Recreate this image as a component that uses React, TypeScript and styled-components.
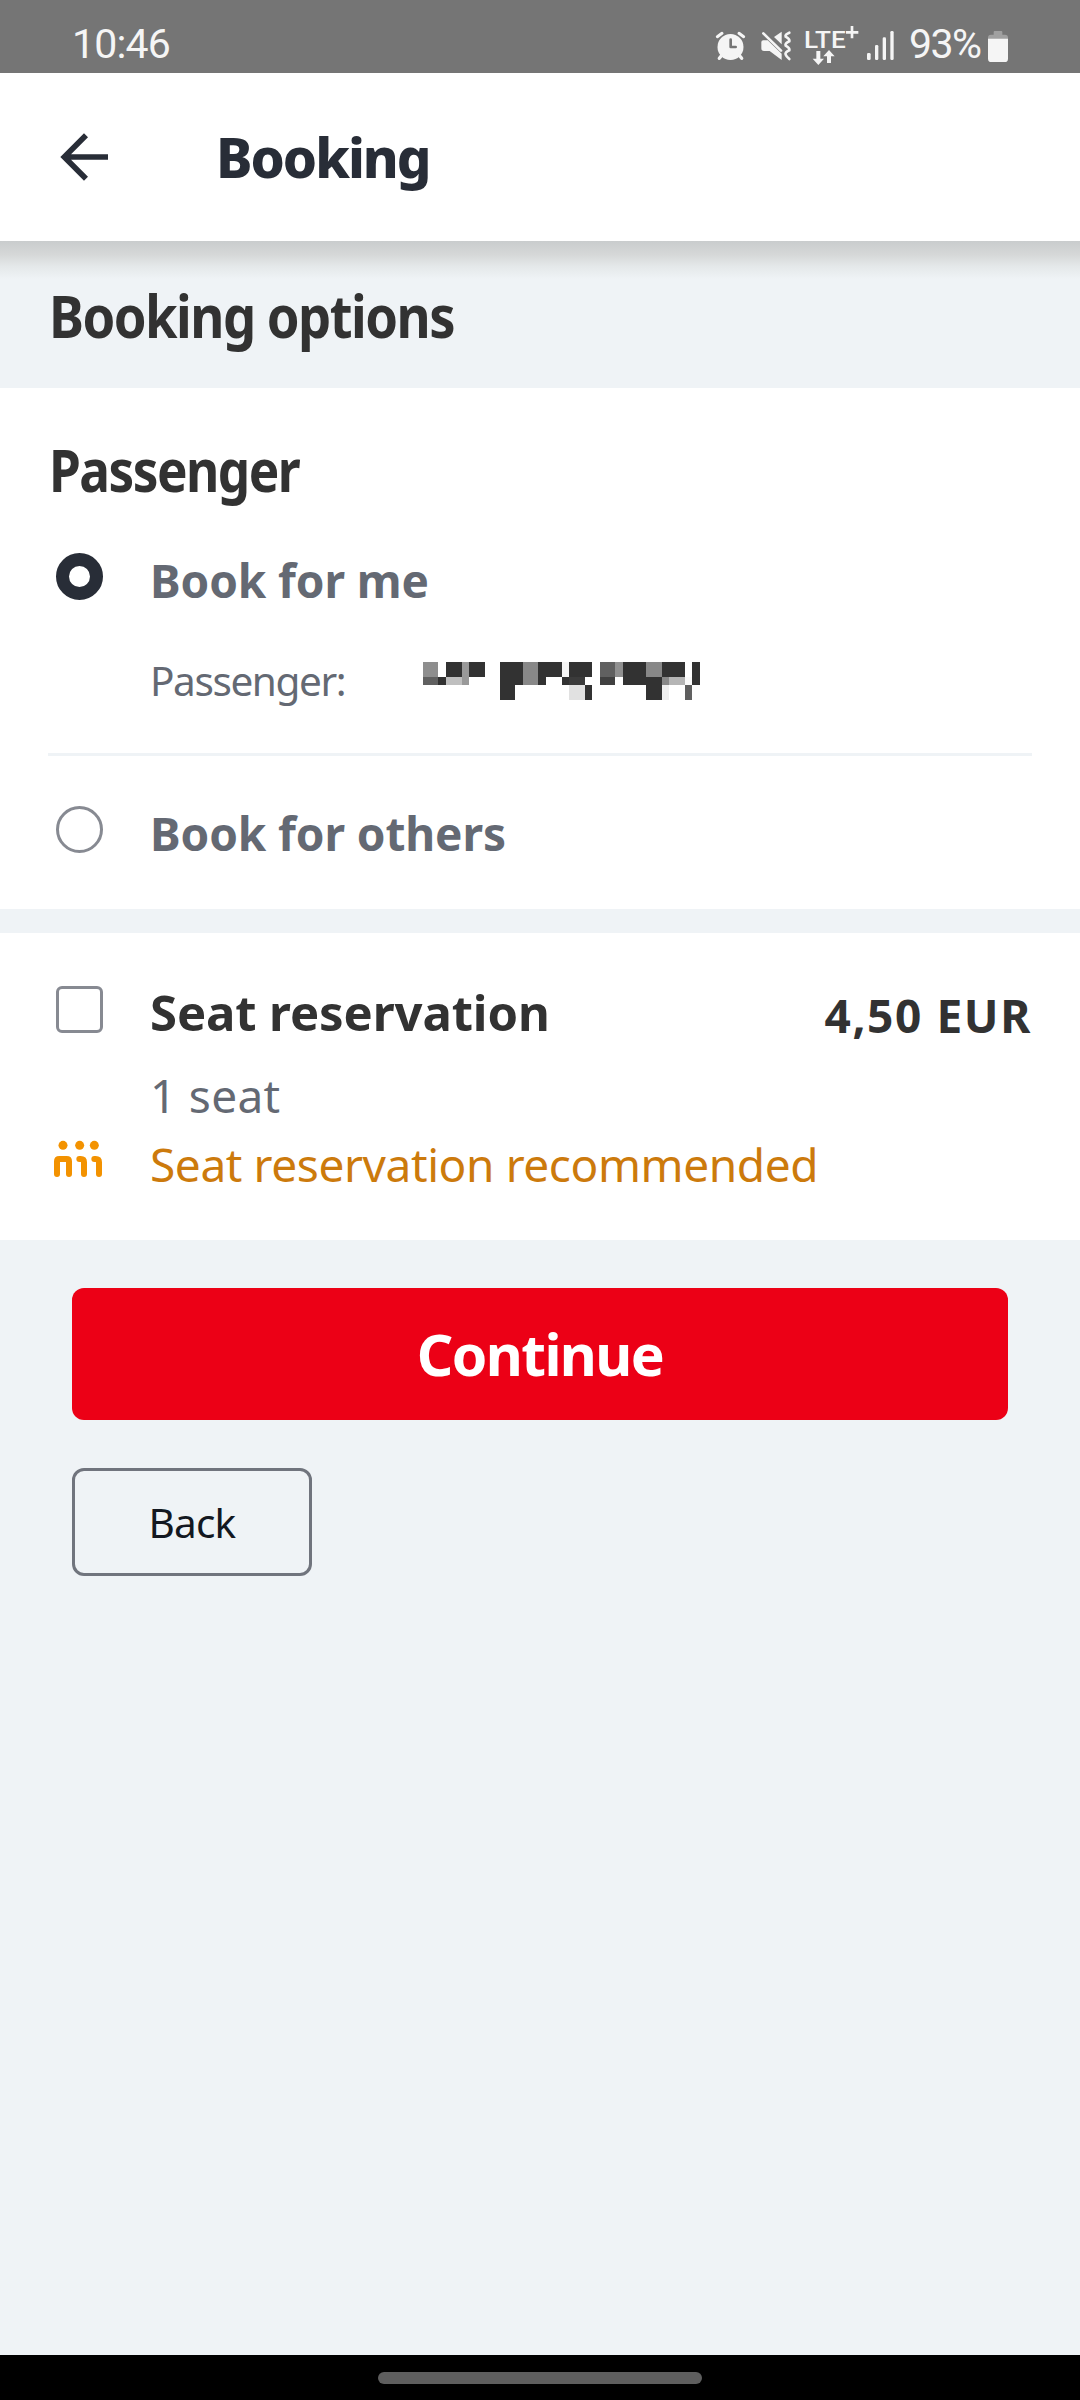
import React from "react";
import styled, { createGlobalStyle } from "styled-components";

const color = {
  status: "#757575",
  onStatus: "#f5f5f5",
  page: "#eff3f6",
  surface: "#ffffff",
  navy: "#282d37",
  heading: "#323232",
  muted: "#646973",
  outline: "#878a92",
  warning: "#cc7a0c",
  warningIcon: "#f39200",
  red: "#ec0016",
};

const GlobalStyle = createGlobalStyle`
  *, *::before, *::after { box-sizing: border-box; }
  body { margin: 0; background: ${color.page}; }
`;

const Screen = styled.div`
  display: flex;
  flex-direction: column;
  width: 1080px;
  height: 2400px;
  overflow: hidden;
  background: ${color.page};
  font-family: "Noto Sans", "Open Sans", sans-serif;
`;

const StatusBar = styled.div`
  display: flex;
  align-items: center;
  justify-content: space-between;
  flex: none;
  height: 73px;
  padding: 13px 72px 0;
  background: ${color.status};
  color: ${color.onStatus};
  font-family: Roboto, sans-serif;
  font-size: 41px;
  line-height: 60px;
`;

const Clock = styled.span`
  padding-top: 2px;
  letter-spacing: -0.8px;
`;

const StatusIcons = styled.div`
  display: flex;
  align-items: center;
`;

const StatusGlyph = styled.svg<{ $width: number; $gap?: number }>`
  display: block;
  flex: none;
  width: ${(p) => p.$width}px;
  height: 45px;
  margin-right: ${(p) => p.$gap ?? 0}px;
`;

const BatteryLevel = styled.span`
  width: 80px;
  padding: 2px 0 0 1px;
  letter-spacing: -1.6px;
  white-space: nowrap;
`;

const AppBar = styled.header`
  display: flex;
  align-items: center;
  flex: none;
  gap: 107px;
  height: 168px;
  padding-left: 60px;
  background: ${color.surface};
`;

const Title = styled.h1`
  margin: 0;
  color: ${color.navy};
  font-size: 54.5px;
  font-weight: 800;
  line-height: 80px;
  letter-spacing: -2px;
`;

const PageHeading = styled.div`
  display: flex;
  align-items: center;
  flex: none;
  height: 147px;
  padding: 1px 0 0 48px;
  background: linear-gradient(#c9cccd 0, #d6d8d8 14px, #e4e8e9 25px, ${color.page} 38px);
`;

const Heading = styled.h2<{ $size: number; $condense: number }>`
  margin: 0 0 0 1px;
  color: ${color.heading};
  font-size: ${(p) => p.$size}px;
  font-weight: 700;
  line-height: 80px;
  letter-spacing: -1.75px;
  white-space: nowrap;
  transform: scaleX(${(p) => p.$condense});
  transform-origin: left center;
`;

const Section = styled.section<{ $top: number }>`
  display: flex;
  flex-direction: column;
  flex: none;
  padding: ${(p) => p.$top}px 48px 47px;
  background: ${color.surface};
`;

const SectionGap = styled.div`
  flex: none;
  height: 24px;
`;

const Row = styled.div<{ $top: number }>`
  display: grid;
  grid-template-columns: 102px 1fr auto;
  height: 60px;
  margin-top: ${(p) => p.$top}px;
`;

const Label = styled.span<{
  $size: number;
  $tracking?: number;
  $tone: string;
  $bold?: boolean;
  $drop?: number;
}>`
  display: block;
  margin-top: ${(p) => p.$drop ?? 1}px;
  color: ${(p) => p.$tone};
  font-size: ${(p) => p.$size}px;
  font-weight: ${(p) => (p.$bold ? 700 : 400)};
  line-height: 60px;
  letter-spacing: ${(p) => p.$tracking ?? 0}px;
  white-space: nowrap;
`;

const Control = styled.span<{ $round?: boolean; $checked?: boolean }>`
  width: 47px;
  height: 47px;
  margin: 4px 0 0 8px;
  border: ${(p) => (p.$checked ? `13px solid ${color.navy}` : `3px solid ${color.outline}`)};
  border-radius: ${(p) => (p.$round ? "50%" : "6px")};
`;

const Detail = styled.div`
  display: flex;
  grid-column: 2 / -1;
  justify-content: flex-start;
`;

const DetailTerm = styled.div`
  flex: none;
  width: 273px;
`;

const Mosaic = styled.svg`
  display: block;
  width: 277px;
  height: 38px;
  margin-top: 12px;
`;

const Divider = styled.hr`
  flex: none;
  width: 100%;
  height: 3px;
  margin: 43px 0 0;
  border: 0;
  background: ${color.page};
`;

const SeatsGlyph = styled.svg`
  display: block;
  width: 50px;
  height: 38px;
  margin: 7px 0 0 6px;
`;

const Actions = styled.div`
  display: flex;
  flex: 1;
  flex-direction: column;
  align-items: flex-start;
  gap: 48px;
  padding: 48px 72px;
`;

const Button = styled.button<{ $primary?: boolean }>`
  display: flex;
  align-items: center;
  justify-content: center;
  width: ${(p) => (p.$primary ? "100%" : "240px")};
  height: ${(p) => (p.$primary ? 132 : 108)}px;
  padding: ${(p) => (p.$primary ? 0 : "1px 0 0")};
  border: ${(p) => (p.$primary ? "0" : "3px solid #70747d")};
  border-radius: 12px;
  background: ${(p) => (p.$primary ? color.red : "transparent")};
  color: ${(p) => (p.$primary ? "#ffffff" : "#131821")};
  font-family: inherit;
  font-size: ${(p) => (p.$primary ? 57 : 40.5)}px;
  font-weight: ${(p) => (p.$primary ? 700 : 400)};
  letter-spacing: ${(p) => (p.$primary ? -1.6 : -0.8)}px;
`;

const GestureBar = styled.div`
  display: flex;
  justify-content: center;
  flex: none;
  height: 45px;
  padding-top: 17px;
  background: #000000;
`;

const GesturePill = styled.div`
  width: 324px;
  height: 12px;
  border-radius: 6px;
  background: #5e5e5e;
`;

const AlarmIcon = () => (
  <StatusGlyph $width={32} $gap={13} viewBox="45 60 96 135">
    <g stroke={color.onStatus} strokeLinecap="round" fill="none">
      <path d="M52 107 66 97M131 107 117 97" strokeWidth="9" />
      <path d="M66 162 58 172M117 162 125 172" strokeWidth="10" />
    </g>
    <circle cx="91.5" cy="138" r="39" fill={color.onStatus} />
    <path d="M92 116V138H107" fill="none" stroke={color.status} strokeWidth="8" strokeLinecap="round" strokeLinejoin="round" />
  </StatusGlyph>
);

const VibrateMuteIcon = () => (
  <StatusGlyph $width={32} $gap={12} viewBox="180 60 96 135">
    <g fill={color.onStatus}>
      <path d="M184 123Q184 118 190 118H203L245 158V177L209 150H192Q184 150 184 142Z" />
      <path d="M222 108 245 92V130Z" />
    </g>
    <path d="M190 97 243 149" stroke={color.onStatus} strokeWidth="8" strokeLinecap="round" />
    <path
      d="M268 95Q254 101 257 107Q270 114 268 121Q254 127 257 134Q270 141 268 148Q254 154 257 161Q259 167 268 174"
      fill="none"
      stroke={color.onStatus}
      strokeWidth="8"
      strokeLinecap="round"
    />
  </StatusGlyph>
);

const NetworkIcon = () => (
  <StatusGlyph $width={56} $gap={6} viewBox="312 60 168 135">
    <text
      x="312"
      y="141"
      fill={color.onStatus}
      fontFamily="Roboto, sans-serif"
      fontSize="74"
      fontWeight="500"
      textLength="125"
      lengthAdjust="spacingAndGlyphs"
    >
      LTE
    </text>
    <path d="M456 75V112M438 94H475" stroke={color.onStatus} strokeWidth="8" />
    <path d="M349 150H361V173H372L355 192 338 173H349Z" fill={color.onStatus} />
    <path d="M381 186V166H370L387 147 404 166H393V186Z" fill={color.onStatus} />
  </StatusGlyph>
);

const SignalIcon = () => (
  <StatusGlyph $width={29} $gap={13} viewBox="498 60 87 135">
    <g fill={color.onStatus}>
      <rect x="501" y="156" width="11" height="21" rx="4" />
      <rect x="525" y="132" width="10" height="45" rx="4" />
      <rect x="548" y="109" width="10" height="68" rx="4" />
      <rect x="571" y="90" width="10" height="87" rx="4" />
    </g>
  </StatusGlyph>
);

const BatteryIcon = () => (
  <StatusGlyph $width={20} viewBox="864 60 60 135">
    <path d="M864 114V110Q864 101 873 101H881V93Q881 90 884 90H904Q907 90 907 93V101H915Q924 101 924 110V114Z" fill="#a0a0a0" />
    <path d="M864 113H924V173Q924 183 914 183H874Q864 183 864 173Z" fill={color.onStatus} />
  </StatusGlyph>
);

const BackArrow = () => (
  <svg width="49" height="50" viewBox="180 396 147 150" fill="none" stroke={color.navy} strokeWidth="17">
    <path d="M258 406 193 471 258 536M195 471H324" />
  </svg>
);

const SeatsIcon = () => (
  <SeatsGlyph viewBox="42 60 150 114">
    <g fill={color.warningIcon}>
      <circle cx="69" cy="76" r="13.5" />
      <circle cx="119" cy="76" r="13.5" />
      <circle cx="163" cy="76" r="13.5" />
    </g>
    <path
      d="M51 162V124Q51 117 58 117H80Q87 117 87 124V162M118 117H122Q132 117 132 127V162M163 117H167Q177 117 177 127V162"
      fill="none"
      stroke={color.warningIcon}
      strokeWidth="18"
      strokeLinecap="round"
    />
  </SeatsGlyph>
);

/* Cells of the redacted name: x, y, width, height, fill. */
const cells: [number, number, number, number, string][] = [
  [0, 0, 15, 15, "#8e8e8e"], [23, 0, 16, 15, "#323232"], [39, 0, 7, 23, "#999999"], [46, 0, 16, 15, "#323232"],
  [77, 0, 23, 23, "#323232"], [100, 0, 15, 23, "#888888"], [115, 0, 24, 15, "#323232"], [139, 0, 7, 15, "#f5f5f5"],
  [146, 0, 23, 15, "#323232"], [177, 0, 15, 15, "#606060"], [192, 0, 8, 15, "#909090"], [200, 0, 23, 23, "#323232"],
  [223, 0, 16, 15, "#888888"], [239, 0, 23, 15, "#323232"], [269, 0, 8, 23, "#323232"],
  [0, 15, 15, 8, "#606060"], [15, 15, 8, 8, "#323232"], [23, 15, 16, 8, "#bfbfbf"], [115, 15, 8, 8, "#323232"],
  [139, 15, 7, 8, "#323232"], [146, 15, 16, 8, "#3b3b3b"], [177, 15, 15, 8, "#404040"], [223, 15, 16, 23, "#323232"],
  [239, 15, 7, 8, "#888888"], [246, 15, 16, 8, "#b5b5b5"], [262, 15, 7, 8, "#fafafa"],
  [77, 23, 15, 15, "#323232"], [146, 23, 16, 15, "#e1e1e1"], [162, 23, 7, 15, "#323232"],
  [239, 23, 7, 15, "#eeeeee"], [262, 23, 7, 15, "#5e5e5e"], [269, 23, 8, 15, "#fcfcfc"],
];

const RedactedName = () => (
  <Mosaic viewBox="0 0 277 38" shapeRendering="crispEdges">
    {cells.map(([x, y, w, h, fill]) => (
      <rect key={`${x}-${y}`} x={x} y={y} width={w} height={h} fill={fill} />
    ))}
  </Mosaic>
);

export default function App() {
  return (
    <Screen>
      <GlobalStyle />
      <StatusBar>
        <Clock>10:46</Clock>
        <StatusIcons>
          <AlarmIcon />
          <VibrateMuteIcon />
          <NetworkIcon />
          <SignalIcon />
          <BatteryLevel>93%</BatteryLevel>
          <BatteryIcon />
        </StatusIcons>
      </StatusBar>

      <AppBar>
        <BackArrow />
        <Title>Booking</Title>
      </AppBar>

      <PageHeading>
        <Heading $size={60} $condense={0.876}>Booking options</Heading>
      </PageHeading>

      <Section $top={41}>
        <Heading $size={59} $condense={0.869}>Passenger</Heading>
        <Row $top={40}>
          <Control $round $checked />
          <Label $size={46} $tone={color.muted} $bold $tracking={-0.1}>Book for me</Label>
        </Row>
        <Row $top={41}>
          <Detail>
            <DetailTerm>
              <Label $size={40.5} $tracking={-1.4} $tone={color.muted}>Passenger:</Label>
            </DetailTerm>
            <RedactedName />
          </Detail>
        </Row>
        <Divider />
        <Row $top={46}>
          <Control $round />
          <Label $size={46} $tone={color.muted} $bold $tracking={-0.1}>Book for others</Label>
        </Row>
      </Section>

      <SectionGap />

      <Section $top={0}>
        <Row $top={49}>
          <Control />
          <Label $size={49} $tone={color.heading} $bold $drop={0} $tracking={-0.1}>Seat reservation</Label>
          <Label $size={46} $tone={color.heading} $bold $drop={3} $tracking={1.6}>4,50 EUR</Label>
        </Row>
        <Row $top={22}>
          <span />
          <Label $size={46} $tone={color.muted} $tracking={0.3}>1 seat</Label>
        </Row>
        <Row $top={9}>
          <SeatsIcon />
          <Label $size={46} $tone={color.warning} $tracking={-0.4}>Seat reservation recommended</Label>
        </Row>
      </Section>

      <Actions>
        <Button $primary>Continue</Button>
        <Button>Back</Button>
      </Actions>

      <GestureBar>
        <GesturePill />
      </GestureBar>
    </Screen>
  );
}
